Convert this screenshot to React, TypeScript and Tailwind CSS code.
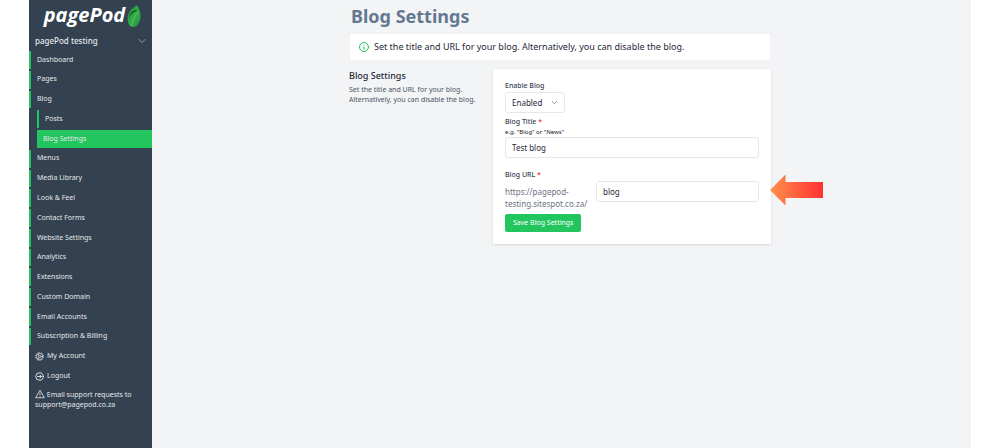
import { useState } from "react";
import type { ReactNode } from "react";
import { ChevronDown } from "lucide-react";

type NavItem = { label: string; sub?: boolean; active?: boolean };

const navItems: NavItem[] = [
    { label: "Dashboard" },
    { label: "Pages" },
    { label: "Blog" },
    { label: "Posts", sub: true },
    { label: "Blog Settings", sub: true, active: true },
    { label: "Menus" },
    { label: "Media Library" },
    { label: "Look & Feel" },
    { label: "Contact Forms" },
    { label: "Website Settings" },
    { label: "Analytics" },
    { label: "Extensions" },
    { label: "Custom Domain" },
    { label: "Email Accounts" },
    { label: "Subscription & Billing" },
];

export default function App() {
    return (
        <div className="min-h-screen bg-white px-[29px] font-['Noto_Sans',sans-serif]">
            <div className="flex min-h-screen bg-[#f2f4f6]">
                <Sidebar />
                <main className="min-w-0 flex-1 pl-[197px] pr-[200px]">
                    <h1 className="mt-1 pl-0.5 text-[18px] leading-6 font-bold text-[#64788f]">
                        Blog Settings
                    </h1>
                    <div className="mt-[5px] flex h-7 items-center gap-1 border border-dotted border-gray-200 bg-white px-2">
                        <InfoIcon />
                        <p className="text-[9px] whitespace-nowrap text-gray-800">
                            Set the title and URL for your blog. Alternatively, you can disable the blog.
                        </p>
                    </div>
                    <div className="mt-2 flex items-start gap-4">
                        <section className="w-32 shrink-0">
                            <h2 className="text-[9px] leading-[14px] font-medium text-gray-800">Blog Settings</h2>
                            <p className="mt-0.5 text-[7px] leading-[10px] text-gray-600">
                                Set the title and URL for your blog. Alternatively, you can disable the blog.
                            </p>
                        </section>
                        <SettingsForm />
                    </div>
                </main>
            </div>
        </div>
    );
}

function Sidebar() {
    return (
        <aside className="w-[123px] shrink-0 bg-[#334150] text-[7px] text-gray-200">
            <div className="flex h-[33px] justify-center gap-0.5 pl-1">
                <span className="font-['Open_Sans',sans-serif] text-[20px] leading-[30px] font-bold text-white italic">
                    pagePod
                </span>
                <LeafIcon />
            </div>
            <button
                type="button"
                className="flex h-4 w-full items-center justify-between pr-1 pl-1.5 text-[8px] font-medium"
            >
                pagePod testing
                <ChevronDown className="size-3 text-slate-400" strokeWidth={2} />
            </button>
            <nav aria-label="Main" className="pt-px">
                <ul className="grid h-[336px] auto-rows-fr">
                    {navItems.map((item) => (
                        <NavLink key={item.label} {...item} />
                    ))}
                    <AccountLink label="My Account">
                        <GearIcon />
                    </AccountLink>
                    <AccountLink label="Logout">
                        <LogoutIcon />
                    </AccountLink>
                </ul>
            </nav>
            <p className="mt-[3px] pl-1.5 leading-[10px]">
                <WarningIcon /> Email support requests to support@pagepod.co.za
            </p>
        </aside>
    );
}

function NavLink({ label, sub, active }: NavItem) {
    const look = active
        ? "border-[#22c55e] bg-[#22c55e] pl-1"
        : "border-[#22c55e] pl-1.5";

    return (
        <li className={sub ? "flex py-px pl-2" : "flex py-px"}>
            <a
                href="#"
                aria-current={active ? "page" : undefined}
                className={`flex flex-1 items-center border-l-2 ${look}`}
            >
                {label}
            </a>
        </li>
    );
}

function AccountLink({ label, children }: { label: string; children: ReactNode }) {
    return (
        <li className="flex">
            <a href="#" className="flex flex-1 items-center gap-[3px] pl-1.5">
                {children}
                {label}
            </a>
        </li>
    );
}

function SettingsForm() {
    const [enabled, setEnabled] = useState("Enabled");
    const [title, setTitle] = useState("Test blog");
    const [url, setUrl] = useState("blog");

    const field =
        "h-[21px] w-full rounded-[3px] border border-gray-200 bg-white px-1.5 text-[8px] text-gray-800 outline-none focus:border-[#22c55e]";

    return (
        <form
            onSubmit={(e) => e.preventDefault()}
            className="relative min-w-0 flex-1 bg-white p-3 text-[7px] leading-[10px] text-gray-700 shadow-sm"
        >
            <label htmlFor="enabled" className="block font-medium">
                Enable Blog
            </label>
            <div className="relative mt-px w-[60px]">
                <select
                    id="enabled"
                    value={enabled}
                    onChange={(e) => setEnabled(e.target.value)}
                    className={`${field} appearance-none`}
                >
                    <option>Enabled</option>
                    <option>Disabled</option>
                </select>
                <ChevronDown
                    className="pointer-events-none absolute top-1.5 right-1.5 size-[9px] text-gray-500"
                    strokeWidth={2}
                />
            </div>

            <label htmlFor="title" className="mt-1 block font-medium">
                Blog Title <span className="text-red-500">*</span>
            </label>
            <p id="title-hint" className="text-[6px] text-gray-900">
                e.g. "Blog" or "News"
            </p>
            <input
                id="title"
                aria-describedby="title-hint"
                value={title}
                onChange={(e) => setTitle(e.target.value)}
                className={field}
            />

            <label htmlFor="url" className="mt-3 block font-medium">
                Blog URL <span className="text-red-500">*</span>
            </label>
            <div className="mt-px flex items-baseline">
                <span className="w-[91px] shrink-0 text-[8px] leading-3 text-gray-500">
                    https://pagepod-testing.sitespot.co.za/
                </span>
                <input id="url" value={url} onChange={(e) => setUrl(e.target.value)} className={field} />
            </div>
            <button
                type="submit"
                className="mt-1 block h-[18px] rounded-xs bg-[#22c55e] px-2 text-[7px] text-white"
            >
                Save Blog Settings
            </button>
            <Arrow />
        </form>
    );
}

function Arrow() {
    return (
        <svg
            viewBox="0 0 54 32"
            className="absolute top-[105px] left-full -ml-px h-8 w-[54px]"
            aria-hidden="true"
        >
            <defs>
                <linearGradient id="arrow">
                    <stop offset="0" stopColor="#ff914d" />
                    <stop offset="1" stopColor="#ff3131" />
                </linearGradient>
            </defs>
            <path d="M0 16 15.500 .5V8H53v16H15.500v7.500z" fill="url(#arrow)" />
        </svg>
    );
}

function LeafIcon() {
    return (
        <svg viewBox="0 0 14 24" className="mt-1 h-6 w-3.5" aria-hidden="true">
            <defs>
                <linearGradient id="leaf" x1="0" y1="0" x2="1" y2="1">
                    <stop offset="0" stopColor="#138a3a" />
                    <stop offset=".55" stopColor="#35b04a" />
                    <stop offset="1" stopColor="#168b45" />
                </linearGradient>
            </defs>
            <path
                d="M9.500 1C7.500 3.500 4.500 4.500 2.500 7.500.5 10.500 0 14.500 1 18c.8 3 2.500 5 5 5 4.500 0 7.500-5 7.500-10.500C13.500 7.500 12 4 9.500 1z"
                fill="url(#leaf)"
            />
            <path
                d="M10.500 5.500c-.5 1.500-3 2-4.500 3.200C4 10.200 2.800 12 2 14c.3-3 1.500-5 3.500-6.500 1.800-1.200 4-1.200 5-2z"
                fill="#1f4a28"
            />
            <path d="M10.500 8.500C7.500 12 5.500 16 5 22" fill="none" stroke="#6cc257" strokeWidth=".8" />
        </svg>
    );
}

function InfoIcon() {
    return (
        <svg
            viewBox="0 0 24 24"
            className="size-3 shrink-0 text-[#22c55e]"
            fill="none"
            stroke="currentColor"
            strokeWidth="2"
            strokeLinecap="round"
            strokeLinejoin="round"
            aria-hidden="true"
        >
            <path d="M13 16h-1v-4h-1m1-4h.01M21 12a9 9 0 11-18 0 9 9 0 0118 0z" />
        </svg>
    );
}

function GearIcon() {
    return (
        <svg
            viewBox="0 0 24 24"
            className="size-[9px]"
            fill="none"
            stroke="currentColor"
            strokeWidth="2"
            strokeLinejoin="round"
            aria-hidden="true"
        >
            <circle cx="12" cy="12" r="8.500" />
            <circle cx="12" cy="12" r="10.800" strokeDasharray="3.400 3.386" />
            <circle cx="12" cy="12" r="3" />
            <path d="M15 12h5.500M10.500 9.400 7.800 4.600M10.500 14.600l-2.700 4.800" />
        </svg>
    );
}

function LogoutIcon() {
    return (
        <svg
            viewBox="0 0 24 24"
            className="size-[9px]"
            fill="none"
            stroke="currentColor"
            strokeWidth="2.500"
            strokeLinecap="round"
            strokeLinejoin="round"
            aria-hidden="true"
        >
            <circle cx="12" cy="12" r="10" />
            <path d="M7 12h10m-4-4 4 4-4 4" />
        </svg>
    );
}

function WarningIcon() {
    return (
        <svg
            viewBox="0 0 24 24"
            className="inline size-2.5 align-text-bottom"
            fill="none"
            stroke="currentColor"
            strokeWidth="2"
            strokeLinejoin="round"
            aria-hidden="true"
        >
            <path d="M12 3 1.500 21h21zM12 9v6m0 2v2" />
        </svg>
    );
}
